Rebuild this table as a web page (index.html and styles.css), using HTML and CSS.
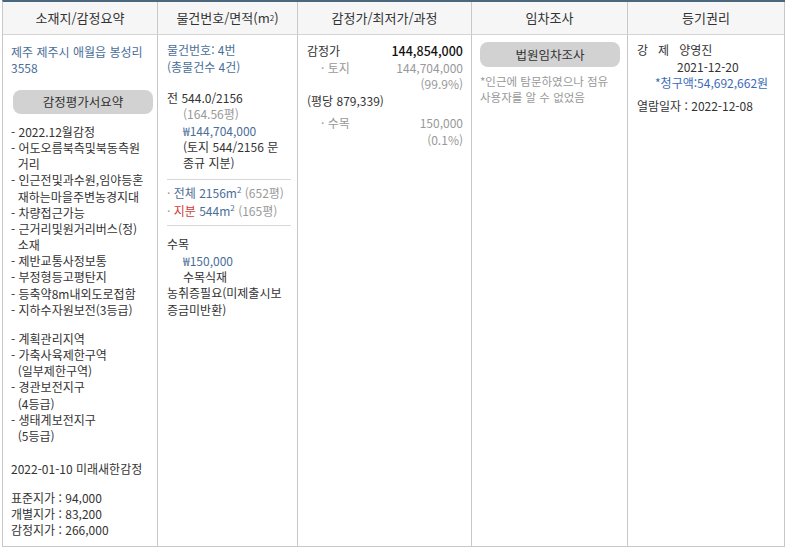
FILE: index.html
```html
<!DOCTYPE html>
<html lang="ko">
<head>
<meta charset="utf-8">
<link rel="stylesheet" href="styles.css">
</head>
<body>
<div class="tbl">
  <div class="row head">
    <div class="cell c1">소재지/감정요약</div>
    <div class="cell c2">물건번호/면적(m<sup>2</sup>)</div>
    <div class="cell c3">감정가/최저가/과정</div>
    <div class="cell c4">임차조사</div>
    <div class="cell c5">등기권리</div>
  </div>
  <div class="row body">
    <div class="cell c1">
      <div class="addr">제주 제주시 애월읍 봉성리<br>3558</div>
      <div class="pill pill1">감정평가서요약</div>
      <ul class="list">
        <li>- 2022.12월감정</li>
        <li>- 어도오름북측및북동측원<br>&nbsp;&nbsp;거리</li>
        <li>- 인근전및과수원,임야등혼<br>&nbsp;&nbsp;재하는마을주변농경지대</li>
        <li>- 차량접근가능</li>
        <li>- 근거리및원거리버스(정)<br>&nbsp;&nbsp;소재</li>
        <li>- 제반교통사정보통</li>
        <li>- 부정형등고평탄지</li>
        <li>- 등축약8m내외도로접함</li>
        <li>- 지하수자원보전(3등급)</li>
        <li class="blank">&nbsp;</li>
        <li>- 계획관리지역</li>
        <li>- 가축사육제한구역<br>&nbsp;&nbsp;(일부제한구역)</li>
        <li>- 경관보전지구<br>&nbsp;&nbsp;(4등급)</li>
        <li>- 생태계보전지구<br>&nbsp;&nbsp;(5등급)</li>
      </ul>
      <div class="date">2022-01-10 미래새한감정</div>
      <div class="prices">표준지가 : 94,000<br>개별지가 : 83,200<br>감정지가 : 266,000</div>
    </div>
    <div class="cell c2">
      <div class="blue num">물건번호: 4번<br>(총물건수 4건)</div>
      <div class="land">
        <div>전 544.0/2156</div>
        <div class="ind gray">(164.56평)</div>
        <div class="ind blue">₩144,704,000</div>
        <div class="ind">(토지 544/2156 문<br>종규 지분)</div>
      </div>
      <div class="divider first"></div>
      <div class="areas">
        <div class="area"><span class="gray">·</span> <span class="blue">전체 2156m<sup>2</sup></span> <span class="gray">(652평)</span></div>
        <div class="area"><span class="gray">·</span> <span class="red">지분</span> <span class="blue">544m<sup>2</sup></span> <span class="gray">(165평)</span></div>
      </div>
      <div class="divider"></div>
      <div class="trees">
        <div>수목</div>
        <div class="ind blue">₩150,000</div>
        <div class="ind">수목식재</div>
        <div>농취증필요(미제출시보<br>증금미반환)</div>
      </div>
    </div>
    <div class="cell c3">
      <div class="line"><span>감정가</span><span class="strong">144,854,000</span></div>
      <div class="line gray"><span class="sub">· 토지</span><span>144,704,000</span></div>
      <div class="line gray right">(99.9%)</div>
      <div class="per">(평당 879,339)</div>
      <div class="line gray"><span class="sub">· 수목</span><span>150,000</span></div>
      <div class="line gray right">(0.1%)</div>
    </div>
    <div class="cell c4">
      <div class="pill pill2">법원임차조사</div>
      <div class="note">*인근에 탐문하였으나 점유<br>사용자를 알 수 없었음</div>
    </div>
    <div class="cell c5">
      <div class="rights">
        <div>강&nbsp;&nbsp;&nbsp;제&nbsp;&nbsp;&nbsp;양영진</div>
        <div class="rdate">2021-12-20</div>
        <div class="claim">*청구액:54,692,662원</div>
      </div>
      <div class="view">열람일자 : 2022-12-08</div>
    </div>
  </div>
</div>
</body>
</html>
```

FILE: styles.css
```css
* { box-sizing: border-box; }
html, body { margin: 0; padding: 0; background: #fff; }
body {
  font-family: "Noto Sans CJK KR", "Noto Sans", sans-serif;
  font-size: 12px;
  line-height: 16.5px;
  color: #333;
}
.tbl {
  margin-left: 2px;
  width: 783px;
  border-top: 2px solid #4b677e;
  border-left: 1px solid #c8c8c8;
  border-bottom: 1px solid #c8c8c8;
}
.row { display: flex; }
.cell { border-right: 1px solid #c8c8c8; }
.c1 { width: 155px; }
.c2 { width: 140px; }
.c3 { width: 174px; }
.c4 { width: 156px; }
.c5 { width: 157px; }
.head .cell {
  height: 33px;
  background: #f6f6f6;
  border-bottom: 1px solid #d4d4d4;
  display: flex;
  align-items: center;
  justify-content: center;
  font-size: 13px;
  color: #333;
}
sup { font-size: 8px; line-height: 0; vertical-align: 5px; }
.body .cell { height: 511px; }
.body .c1 { padding: 9px 6px 0 8px; }
.addr { color: #4a6e98; line-height: 15.5px; }
.pill {
  background: #d2d2d2;
  border-radius: 8px;
  text-align: center;
  color: #333;
  font-size: 12.5px;
}
.pill1 { margin: 15px 0 0 2px; width: 140px; height: 24px; line-height: 24px; }
.list { list-style: none; margin: 10px 0 0; padding: 0; color: #333; }
.list li { line-height: 16.15px; }
.list li.blank { height: 13px; }
.date { margin-top: 17px; }
.prices { margin-top: 13px; line-height: 16px; }
.blue { color: #4a6e98; }
.gray { color: #999; }
.red { color: #d23a3a; }
.ind { padding-left: 16px; }
.body .c2 { padding: 7px 6px 0 9px; }
.c2 .num { line-height: 16.5px; }
.land { margin-top: 15px; line-height: 16.3px; }
.divider { height: 1px; background: #d8d8d8; }
.divider.first { margin-top: 8px; }
.areas { padding: 4px 0 5px; }
.area { line-height: 18px; }
.trees { margin-top: 10px; line-height: 16.3px; }
.body .c3 { padding: 8px 8px 0 9px; }
.line { display: flex; justify-content: space-between; line-height: 16.5px; }
.line.right { justify-content: flex-end; }
.strong { color: #111; font-size: 12.5px; font-weight: 500; }
.sub { padding-left: 14px; }
.per { line-height: 16.5px; margin-bottom: 6px; padding-left: 0; }
.body .c4 { padding: 7px 7px 0 7px; }
.pill2 { width: 140px; height: 25px; line-height: 25px; margin-left: 1px; }
.note { margin-top: 7px; color: #999; line-height: 15.5px; font-size: 11.5px; padding-left: 1px; }
.body .c5 { padding: 7px 6px 0 9px; }
.rights { line-height: 16.5px; }
.rdate { padding-left: 40px; }
.claim { padding-left: 18px; color: #3a6bb8; }
.view { margin-top: 6px; }
```
